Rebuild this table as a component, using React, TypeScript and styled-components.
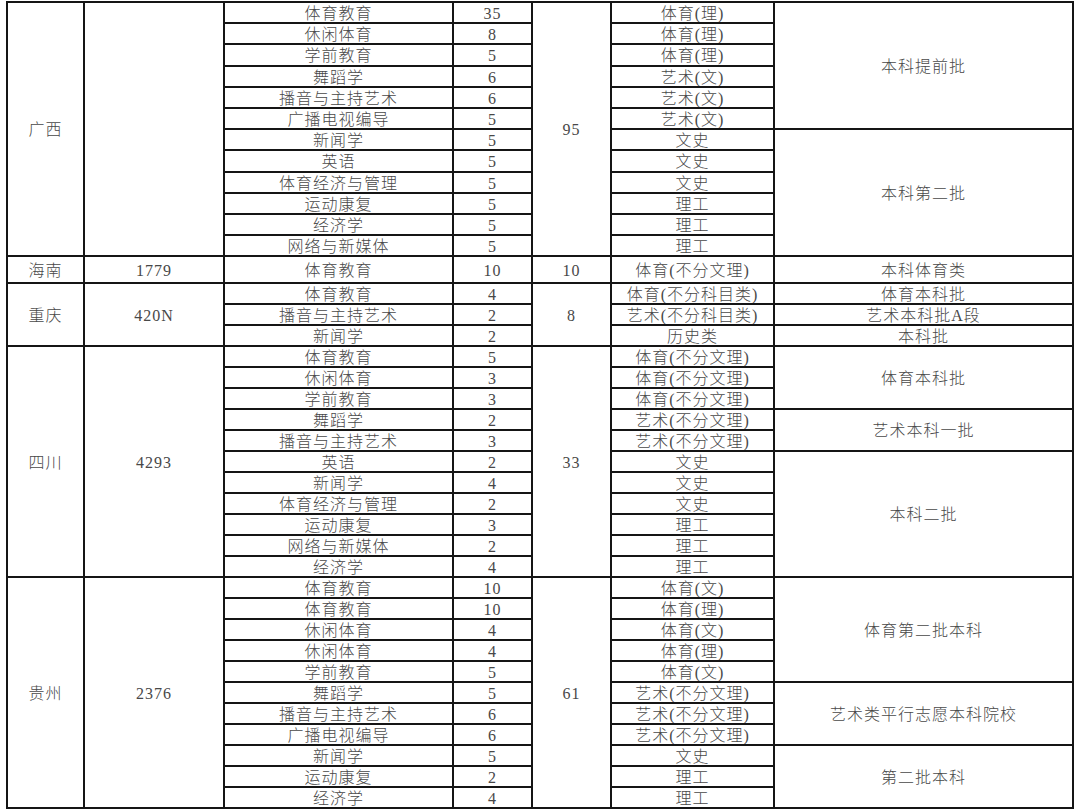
import { createGlobalStyle, styled } from 'styled-components';

type MajorRow = {
  major: string;
  count: string;
  kind: string;
};

type BatchSpan = {
  label: string;
  span: number;
};

type Province = {
  name: string;
  code: string;
  total: string;
  rowHeight: number;
  rows: MajorRow[];
  batches: BatchSpan[];
};

const row = (major: string, count: string, kind: string): MajorRow => ({
  major,
  count,
  kind,
});

const PROVINCES: Province[] = [
  {
    name: '广西',
    code: '',
    total: '95',
    rowHeight: 21.2,
    rows: [
      row('体育教育', '35', '体育(理)'),
      row('休闲体育', '8', '体育(理)'),
      row('学前教育', '5', '体育(理)'),
      row('舞蹈学', '6', '艺术(文)'),
      row('播音与主持艺术', '6', '艺术(文)'),
      row('广播电视编导', '5', '艺术(文)'),
      row('新闻学', '5', '文史'),
      row('英语', '5', '文史'),
      row('体育经济与管理', '5', '文史'),
      row('运动康复', '5', '理工'),
      row('经济学', '5', '理工'),
      row('网络与新媒体', '5', '理工'),
    ],
    batches: [
      { label: '本科提前批', span: 6 },
      { label: '本科第二批', span: 6 },
    ],
  },
  {
    name: '海南',
    code: '1779',
    total: '10',
    rowHeight: 27,
    rows: [row('体育教育', '10', '体育(不分文理)')],
    batches: [{ label: '本科体育类', span: 1 }],
  },
  {
    name: '重庆',
    code: '420N',
    total: '8',
    rowHeight: 21,
    rows: [
      row('体育教育', '4', '体育(不分科目类)'),
      row('播音与主持艺术', '2', '艺术(不分科目类)'),
      row('新闻学', '2', '历史类'),
    ],
    batches: [
      { label: '体育本科批', span: 1 },
      { label: '艺术本科批A段', span: 1 },
      { label: '本科批', span: 1 },
    ],
  },
  {
    name: '四川',
    code: '4293',
    total: '33',
    rowHeight: 21,
    rows: [
      row('体育教育', '5', '体育(不分文理)'),
      row('休闲体育', '3', '体育(不分文理)'),
      row('学前教育', '3', '体育(不分文理)'),
      row('舞蹈学', '2', '艺术(不分文理)'),
      row('播音与主持艺术', '3', '艺术(不分文理)'),
      row('英语', '2', '文史'),
      row('新闻学', '4', '文史'),
      row('体育经济与管理', '2', '文史'),
      row('运动康复', '3', '理工'),
      row('网络与新媒体', '2', '理工'),
      row('经济学', '4', '理工'),
    ],
    batches: [
      { label: '体育本科批', span: 3 },
      { label: '艺术本科一批', span: 2 },
      { label: '本科二批', span: 6 },
    ],
  },
  {
    name: '贵州',
    code: '2376',
    total: '61',
    rowHeight: 21,
    rows: [
      row('体育教育', '10', '体育(文)'),
      row('体育教育', '10', '体育(理)'),
      row('休闲体育', '4', '体育(文)'),
      row('休闲体育', '4', '体育(理)'),
      row('学前教育', '5', '体育(文)'),
      row('舞蹈学', '5', '艺术(不分文理)'),
      row('播音与主持艺术', '6', '艺术(不分文理)'),
      row('广播电视编导', '6', '艺术(不分文理)'),
      row('新闻学', '5', '文史'),
      row('运动康复', '2', '理工'),
      row('经济学', '4', '理工'),
    ],
    batches: [
      { label: '体育第二批本科', span: 5 },
      { label: '艺术类平行志愿本科院校', span: 3 },
      { label: '第二批本科', span: 3 },
    ],
  },
];

const COLUMN_WIDTHS = [77, 140, 229, 79, 79, 163, 299];

// which row of a province opens a new batch cell
const batchStarts = (batches: BatchSpan[]) => {
  const starts: Record<number, BatchSpan> = {};
  let at = 0;
  batches.forEach(batch => {
    starts[at] = batch;
    at += batch.span;
  });
  return starts;
};

const App = () => {
  return (
    <Page>
      <GlobalStyle />
      <Sheet>
        <colgroup>
          {COLUMN_WIDTHS.map((width, index) => (
            <col key={index} style={{ width }} />
          ))}
        </colgroup>
        <tbody>
          {PROVINCES.map(province => {
            const starts = batchStarts(province.batches);
            const span = province.rows.length;
            return province.rows.map((item, index) => (
              <Row key={`${province.name}-${index}`} $h={province.rowHeight}>
                {index === 0 && (
                  <>
                    <MergedCell rowSpan={span}>{province.name}</MergedCell>
                    <MergedCell rowSpan={span}>{province.code}</MergedCell>
                  </>
                )}
                <Cell>{item.major}</Cell>
                <Cell>{item.count}</Cell>
                {index === 0 && (
                  <MergedCell rowSpan={span}>{province.total}</MergedCell>
                )}
                <Cell>{item.kind}</Cell>
                {starts[index] && (
                  <MergedCell rowSpan={starts[index].span}>
                    {starts[index].label}
                  </MergedCell>
                )}
              </Row>
            ));
          })}
        </tbody>
      </Sheet>
    </Page>
  );
};

export default App;

const GlobalStyle = createGlobalStyle`
  html, body {
    margin: 0;
    padding: 0;
    background: #ffffff;
  }
`;

const Page = styled.div`
  width: 1080px;
  height: 811px;
  overflow: hidden;
  background: #ffffff;
  padding: 1px 0 0 6px;
  box-sizing: border-box;
`;

const Sheet = styled.table`
  table-layout: fixed;
  width: 1068px;
  border-collapse: collapse;
  font-family: 'Liberation Serif', 'Noto Sans CJK SC', serif;
  font-size: 16px;
  font-weight: 300;
  letter-spacing: 1px;
  color: #484848;
`;

const Row = styled.tr<{ $h: number }>`
  height: ${props => props.$h}px;
`;

const Cell = styled.td`
  border: 2px solid #151515;
  padding: 3px 0 0;
  line-height: 16px;
  text-align: center;
  vertical-align: middle;
  white-space: nowrap;
  overflow: hidden;
`;

const MergedCell = styled(Cell)`
  padding: 2px 0 0;
`;
